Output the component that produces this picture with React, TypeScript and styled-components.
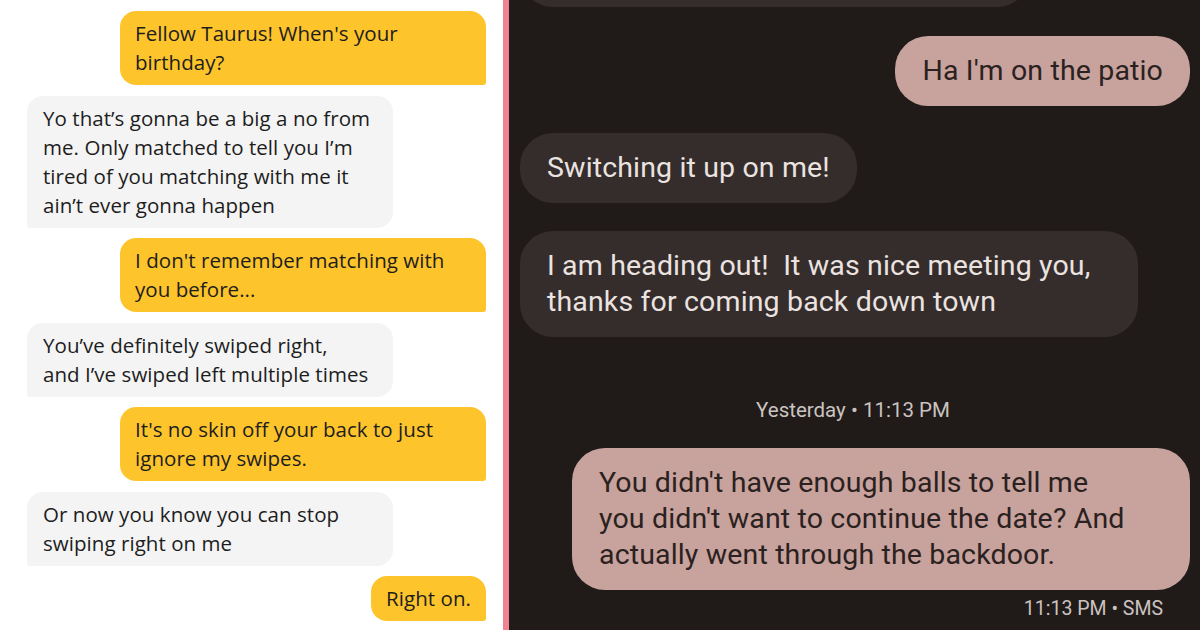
import React from 'react';
import styled, { createGlobalStyle } from 'styled-components';

const Global = createGlobalStyle`
  html, body { margin: 0; padding: 0; }
  body { width: 1200px; height: 630px; overflow: hidden; background: #fff; }
`;

const Split = styled.div`
  display: flex;
  width: 1200px;
  height: 630px;
  overflow: hidden;
`;

const LeftPane = styled.div`
  width: 503px;
  flex: none;
  background: #ffffff;
  display: flex;
  flex-direction: column;
  gap: 10.5px;
  padding: 11px 17px 0 27px;
  box-sizing: border-box;
  font-family: 'Open Sans', 'Noto Sans', sans-serif;
`;

const Divider = styled.div`
  width: 6px;
  flex: none;
  background: #ef8393;
`;

const RightPane = styled.div`
  flex: 1;
  background: #201b19;
  display: flex;
  flex-direction: column;
  padding: 0 10px 0 11px;
  font-family: Roboto, 'Noto Sans', sans-serif;
`;

const BumbleBubble = styled.div<{ $mine?: boolean; $fit?: boolean }>`
  align-self: ${(p) => (p.$mine ? 'flex-end' : 'flex-start')};
  width: ${(p) => (p.$fit ? 'auto' : '366px')};
  box-sizing: border-box;
  padding: 8px 15px 8px ${(p) => (p.$mine ? '15px' : '16px')};
  background: ${(p) => (p.$mine ? '#fdc42b' : '#f4f4f4')};
  border-radius: ${(p) => (p.$mine ? '16px 16px 3px 16px' : '16px 16px 16px 3px')};
  color: #1d1d1d;
  font-size: 20.5px;
  letter-spacing: 0.05px;
  line-height: 29px;
  white-space: nowrap;
`;

const MsgBubble = styled.div<{ $mine?: boolean; $wide?: boolean }>`
  align-self: ${(p) => (p.$mine ? 'flex-end' : 'flex-start')};
  width: ${(p) => (p.$wide ? '618px' : 'auto')};
  box-sizing: border-box;
  padding: 17px 27px 17px 27px;
  background: ${(p) => (p.$mine ? '#c8a29c' : '#352d2c')};
  color: ${(p) => (p.$mine ? '#2a2120' : '#ebe3e0')};
  border-radius: 33px;
  font-size: 28.5px;
  letter-spacing: 0.15px;
  line-height: 36px;
  white-space: nowrap;
`;

const CutBubble = styled(MsgBubble)`
  width: 510px;
  height: 70px;
  margin-top: -63px;
`;

const Spacer = styled.div<{ $h: number }>`
  height: ${(p) => p.$h}px;
  flex: none;
`;

const Stamp = styled.div<{ $align?: 'center' | 'right' }>`
  align-self: ${(p) => (p.$align === 'right' ? 'flex-end' : 'center')};
  color: #cbc3c0;
  font-size: ${(p) => (p.$align === 'right' ? '19.5px' : '20.5px')};
  line-height: 22px;
  padding-right: ${(p) => (p.$align === 'right' ? '27px' : '0')};
  margin-left: ${(p) => (p.$align === 'right' ? '0' : '-4px')};
`;

export default function App() {
  return (
    <>
      <Global />
      <Split>
        <LeftPane>
          <BumbleBubble $mine>
            Fellow Taurus! When's your
            <br />
            birthday?
          </BumbleBubble>
          <BumbleBubble>
            Yo that’s gonna be a big a no from
            <br />
            me. Only matched to tell you I’m
            <br />
            tired of you matching with me it
            <br />
            ain’t ever gonna happen
          </BumbleBubble>
          <BumbleBubble $mine>
            I don't remember matching with
            <br />
            you before...
          </BumbleBubble>
          <BumbleBubble>
            You’ve definitely swiped right,
            <br />
            and I’ve swiped left multiple times
          </BumbleBubble>
          <BumbleBubble $mine>
            It's no skin off your back to just
            <br />
            ignore my swipes.
          </BumbleBubble>
          <BumbleBubble>
            Or now you know you can stop
            <br />
            swiping right on me
          </BumbleBubble>
          <BumbleBubble $mine $fit>
            Right on.
          </BumbleBubble>
        </LeftPane>
        <Divider />
        <RightPane>
          <CutBubble />
          <Spacer $h={29} />
          <MsgBubble $mine>Ha I'm on the patio</MsgBubble>
          <Spacer $h={27} />
          <MsgBubble>Switching it up on me!</MsgBubble>
          <Spacer $h={28} />
          <MsgBubble $wide>
            I am heading out!&nbsp; It was nice meeting you,
            <br />
            thanks for coming back down town
          </MsgBubble>
          <Spacer $h={62} />
          <Stamp>Yesterday • 11:13 PM</Stamp>
          <Spacer $h={27} />
          <MsgBubble $mine $wide>
            You didn't have enough balls to tell me
            <br />
            you didn't want to continue the date? And
            <br />
            actually went through the backdoor.
          </MsgBubble>
          <Spacer $h={8} />
          <Stamp $align="right">11:13 PM • SMS</Stamp>
        </RightPane>
      </Split>
    </>
  );
}
